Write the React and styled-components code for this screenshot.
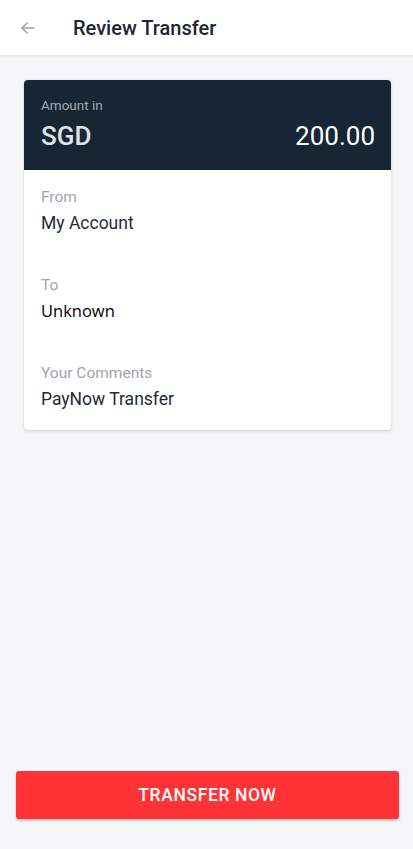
import React from "react";
import styled, { createGlobalStyle } from "styled-components";

const Global = createGlobalStyle`
  html, body { margin: 0; padding: 0; }
  body { font-family: Roboto, "Noto Sans", sans-serif; background: #f5f6f8; }
  * { box-sizing: border-box; }
`;

const Page = styled.div`
  width: 413px;
  height: 849px;
  display: flex;
  flex-direction: column;
  background: #f5f6f8;
`;

const Header = styled.header`
  height: 56px;
  flex: none;
  display: flex;
  align-items: center;
  background: #ffffff;
  border-bottom: 1px solid #e9eaed;
  box-shadow: 0 1px 2px rgba(0,0,0,0.04);
`;

const BackButton = styled.button`
  width: 56px;
  height: 56px;
  border: none;
  background: transparent;
  padding: 0;
  display: flex;
  align-items: center;
  justify-content: center;
  color: #9aa0a8;
`;

const Title = styled.h1`
  margin: 0 0 0 17px;
  font-size: 20px;
  font-weight: 500;
  color: #1d2733;
`;

const Content = styled.main`
  flex: 1;
  padding: 24px 22px 0 24px;
`;

const Card = styled.section`
  background: #ffffff;
  border-radius: 4px;
  overflow: hidden;
  box-shadow: 0 1px 3px rgba(0,0,0,0.18);
`;

const AmountPanel = styled.div`
  background: #172634;
  padding: 16px 16px 20px 17px;
  height: 90px;
`;

const AmountLabel = styled.div`
  font-size: 13.5px;
  line-height: 18px;
  color: #a3aab3;
`;

const AmountRow = styled.div`
  margin-top: 7px;
  display: flex;
  justify-content: space-between;
  align-items: center;
  font-size: 26px;
  line-height: 30px;
`;

const Currency = styled.span`
  color: #dfe3e8;
  font-weight: 500;
`;

const Amount = styled.span`
  color: #ffffff;
`;

const Fields = styled.div`
  display: flex;
  flex-direction: column;
  gap: 39px;
  padding: 16px 16px 19px 17px;
`;

const Field = styled.div`
  display: flex;
  flex-direction: column;
  gap: 3px;
`;

const FieldLabel = styled.div`
  font-size: 15.5px;
  line-height: 22px;
  color: #a0a5ad;
`;

const FieldValue = styled.div`
  line-height: 24px;
  color: ${(p) => (p.$plain ? "#000000" : "#1f2a36")};
  font-family: ${(p) => (p.$plain ? '"Open Sans", "Noto Sans", sans-serif' : 'Roboto, sans-serif')};
  font-size: ${(p) => (p.$plain ? "16.5px" : "17.5px")};
`;

const Footer = styled.div`
  padding: 0 14px 30px 16px;
`;

const PrimaryButton = styled.button`
  width: 100%;
  height: 48px;
  border: none;
  border-radius: 3px;
  background: #ff3336;
  color: #ffffff;
  font-family: Roboto, sans-serif;
  font-size: 17.5px;
  font-weight: 500;
  letter-spacing: 0.6px;
  box-shadow: 0 2px 3px rgba(0,0,0,0.2);
`;

export default function App() {
  return (
    <>
      <Global />
      <Page>
        <Header>
          <BackButton aria-label="Back">
            <svg width="18" height="18" viewBox="0 0 24 24" fill="none" stroke="currentColor" strokeWidth="2" strokeLinecap="round" strokeLinejoin="round">
              <path d="M20 12H4" />
              <path d="M11 5l-7 7 7 7" />
            </svg>
          </BackButton>
          <Title>Review Transfer</Title>
        </Header>
        <Content>
          <Card>
            <AmountPanel>
              <AmountLabel>Amount in</AmountLabel>
              <AmountRow>
                <Currency>SGD</Currency>
                <Amount>200.00</Amount>
              </AmountRow>
            </AmountPanel>
            <Fields>
              <Field>
                <FieldLabel>From</FieldLabel>
                <FieldValue>My Account</FieldValue>
              </Field>
              <Field>
                <FieldLabel>To</FieldLabel>
                <FieldValue $plain>Unknown</FieldValue>
              </Field>
              <Field>
                <FieldLabel>Your Comments</FieldLabel>
                <FieldValue>PayNow Transfer</FieldValue>
              </Field>
            </Fields>
          </Card>
        </Content>
        <Footer>
          <PrimaryButton>TRANSFER NOW</PrimaryButton>
        </Footer>
      </Page>
    </>
  );
}
